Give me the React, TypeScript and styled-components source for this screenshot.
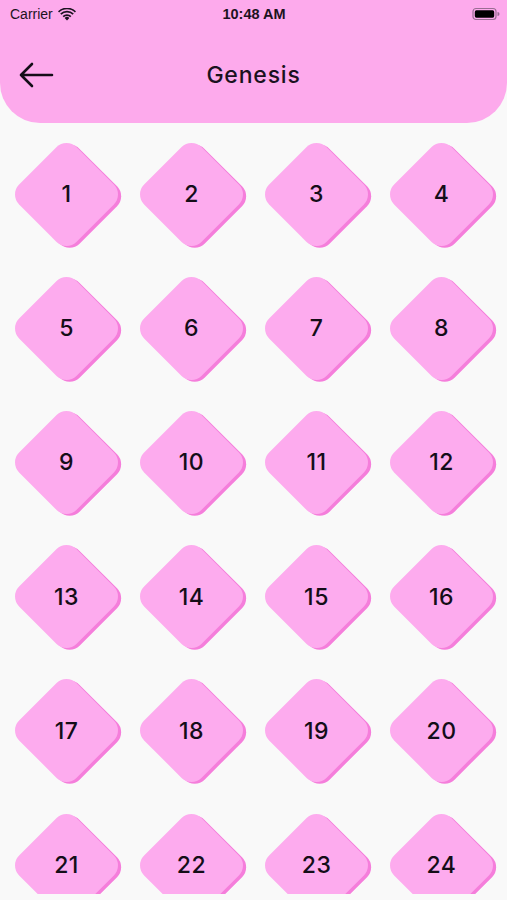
import React from 'react';
import styled, { createGlobalStyle } from 'styled-components';

const Global = createGlobalStyle`
  html, body { margin: 0; padding: 0; background: #f9f9f9; }
  body { font-family: Inter, "Noto Sans", sans-serif; }
`;

const Screen = styled.div`
  width: 507px;
  height: 900px;
  background: #f9f9f9;
  display: flex;
  flex-direction: column;
  overflow: hidden;
`;

const Header = styled.div`
  background: #fdaaec;
  height: 123px;
  border-radius: 0 0 40px 40px;
  display: flex;
  flex-direction: column;
  flex-shrink: 0;
`;

const StatusBar = styled.div`
  height: 28px;
  display: grid;
  grid-template-columns: 1fr auto 1fr;
  align-items: center;
  padding: 0 7px 0 10px;
  font-family: "Liberation Sans", Arial, sans-serif;
  font-size: 14px;
  color: #1b1320;
`;

const Carrier = styled.div`
  display: flex;
  align-items: center;
  gap: 5px;
`;

const Clock = styled.div`
  font-weight: 700;
  font-size: 14.5px;
  padding-right: 2px;
`;

const Battery = styled.div`
  justify-self: end;
  display: flex;
  align-items: center;
`;

const NavRow = styled.div`
  flex: 1;
  display: grid;
  grid-template-columns: 1fr auto 1fr;
  align-items: center;
  padding: 0 18px 1px;
`;

const BackButton = styled.div`
  display: flex;
`;

const Title = styled.div`
  font-size: 23px;
  font-weight: 500;
  color: #1a1220;
  letter-spacing: 0.8px;
`;

const List = styled.div`
  height: 767px;
  overflow: hidden;
  padding: 4px 3px 0 4px;
`;

const Grid = styled.div`
  display: grid;
  grid-template-columns: repeat(4, 125px);
  grid-auto-rows: 134.2px;
`;

const Cell = styled.div`
  display: flex;
  align-items: center;
  justify-content: center;
  position: relative;
`;

const Diamond = styled.div`
  width: 81px;
  height: 81px;
  border-radius: 14px;
  background: #fdabee;
  transform: rotate(45deg);
  box-shadow: 3.5px -1px 0 #f57edb;
`;

const Num = styled.span`
  position: absolute;
  font-size: 23px;
  font-weight: 500;
  color: #140d18;
  letter-spacing: 0.5px;
`;

const Wifi = () => (
  <svg width="18" height="13" viewBox="0 0 18 13">
    <path d="M9 12.5 L6.6 10 A3.4 3.4 0 0 1 11.4 10 Z" fill="#1b1320" />
    <path d="M4.6 8 A6.3 6.3 0 0 1 13.4 8 L12.2 9.2 A4.6 4.6 0 0 0 5.8 9.2 Z" fill="#1b1320" />
    <path d="M2.2 5.6 A9.7 9.7 0 0 1 15.8 5.6 L14.6 6.8 A8 8 0 0 0 3.4 6.8 Z" fill="#1b1320" />
    <path d="M0 3.3 A12.8 12.8 0 0 1 18 3.3 L16.9 4.5 A11.2 11.2 0 0 0 1.1 4.5 Z" fill="#1b1320" />
  </svg>
);

const BatteryIcon = () => (
  <svg width="28" height="14" viewBox="0 0 28 14">
    <rect x="1" y="1.5" width="23" height="11" rx="3" fill="none" stroke="#9a6d93" strokeWidth="1.2" />
    <rect x="2.8" y="3.3" width="19.4" height="7.4" rx="1.6" fill="#000" />
    <path d="M25.5 5 v4 a2 2 0 0 0 0 -4z" fill="#9a6d93" />
  </svg>
);

const Arrow = () => (
  <svg width="36" height="26" viewBox="0 0 36 26">
    <path d="M34 13 H3 M14 2 L3 13 L14 24" fill="none" stroke="#140d18" strokeWidth="2.6" strokeLinecap="round" strokeLinejoin="round" />
  </svg>
);

const chapters = Array.from({ length: 24 }, (_, i) => i + 1);

export default function App() {
  return (
    <>
      <Global />
      <Screen>
        <Header>
          <StatusBar>
            <Carrier>
              Carrier <Wifi />
            </Carrier>
            <Clock>10:48 AM</Clock>
            <Battery>
              <BatteryIcon />
            </Battery>
          </StatusBar>
          <NavRow>
            <BackButton>
              <Arrow />
            </BackButton>
            <Title>Genesis</Title>
            <span />
          </NavRow>
        </Header>
        <List>
          <Grid>
            {chapters.map((n) => (
              <Cell key={n}>
                <Diamond />
                <Num>{n}</Num>
              </Cell>
            ))}
          </Grid>
        </List>
      </Screen>
    </>
  );
}
